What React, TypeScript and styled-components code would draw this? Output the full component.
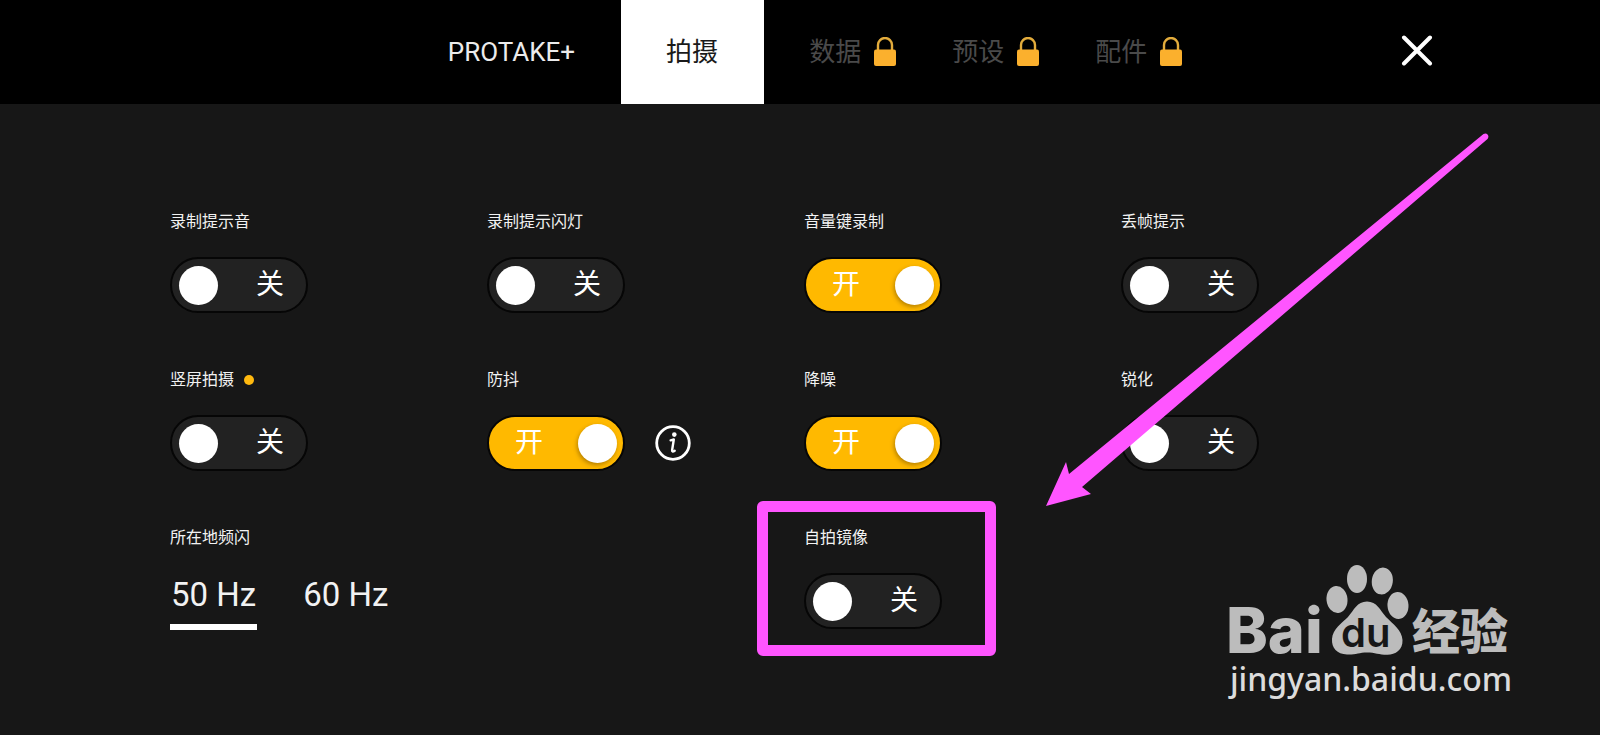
import React, { useState } from 'react';
import styled, { createGlobalStyle } from 'styled-components';

const GlobalStyle = createGlobalStyle`
  * { box-sizing: border-box; }
  body {
    margin: 0;
    background: #171717;
    color: #f2f2f2;
    font-family: Roboto, "Noto Sans CJK SC", sans-serif;
  }
  button, input { font-family: inherit; }
`;

const Page = styled.div`
  position: relative;
  min-height: 100vh;
  overflow: hidden;
`;

const Header = styled.header`
  display: grid;
  grid-template-columns: 1fr auto 1fr;
  height: 104px;
  background: #000;
`;

const Tabs = styled.nav`
  grid-column: 2;
  display: flex;
  margin-right: 4px;
`;

const Tab = styled.button<{ $active?: boolean; $locked?: boolean }>`
  display: flex;
  align-items: center;
  gap: 12px;
  padding: ${(p) => (p.$locked ? '0 10px 0 45px' : '0 46px 0 45px')};
  border: 0;
  background: ${(p) => (p.$active ? '#fff' : 'transparent')};
  color: ${(p) => (p.$active ? '#1a1a1a' : p.$locked ? '#4a4a4a' : '#ececec')};
  font-size: 26px;
  line-height: 32px;
  white-space: nowrap;
`;

const CloseButton = styled.button`
  justify-self: end;
  align-self: center;
  display: flex;
  margin-right: 160px;
  padding: 6px;
  border: 0;
  background: transparent;
  color: #fff;
`;

const Settings = styled.main`
  display: grid;
  grid-template-columns: repeat(4, 1fr);
  row-gap: 57px;
  padding: 108px 162px 96px 170px;
`;

const Field = styled.div<{ $column?: number }>`
  position: relative;
  display: flex;
  flex-direction: column;
  align-items: flex-start;
  gap: 25px;
  ${(p) => p.$column && `grid-column: ${p.$column};`}
`;

const Caption = styled.div`
  display: flex;
  align-items: center;
  gap: 10px;
  font-size: 16px;
  line-height: 20px;
  white-space: nowrap;
`;

const Dot = styled.span`
  width: 10px;
  height: 10px;
  border-radius: 50%;
  background: #ffb90f;
`;

const Control = styled.div`
  display: flex;
  align-items: center;
  gap: 30px;
`;

const Track = styled.label<{ $on: boolean }>`
  position: relative;
  display: flex;
  flex-direction: ${(p) => (p.$on ? 'row-reverse' : 'row')};
  align-items: center;
  justify-content: space-between;
  width: 138px;
  height: 56px;
  padding: ${(p) => (p.$on ? '0 6px 0 26px' : '0 22px 0 7px')};
  border: 2px solid #060606;
  border-radius: 28px;
  background: ${(p) => (p.$on ? '#ffb900' : '#222')};
  color: #fff;
  font-size: 28px;
  line-height: 40px;
`;

const HiddenInput = styled.input`
  position: absolute;
  inset: 0;
  width: 100%;
  height: 100%;
  margin: 0;
  opacity: 0;
`;

const Knob = styled.span<{ $on: boolean }>`
  width: 39px;
  height: 39px;
  border-radius: 50%;
  background: #fff;
  box-shadow: ${(p) => (p.$on ? '-1px 2px 4px rgba(90, 60, 0, 0.45)' : 'none')};
`;

const InfoButton = styled.button`
  display: flex;
  padding: 0;
  border: 0;
  background: transparent;
  color: #fff;
`;

const RadioRow = styled.div`
  display: flex;
  gap: 45px;
`;

const RadioOption = styled.label<{ $selected: boolean }>`
  position: relative;
  margin-top: 2px;
  padding: 0 1px 9px;
  border-bottom: 6px solid ${(p) => (p.$selected ? '#fff' : 'transparent')};
  font-size: 33px;
  line-height: 40px;
  white-space: nowrap;
`;

const Highlight = styled.div`
  position: absolute;
  top: -27px;
  left: -47px;
  width: 239px;
  height: 155px;
  border: 11px solid #ff55ff;
  border-radius: 6px;
  pointer-events: none;
`;

const Arrow = styled.svg`
  position: absolute;
  top: -396px;
  left: 242px;
  z-index: 1;
  pointer-events: none;
`;

const Watermark = styled.div`
  position: absolute;
  right: 88px;
  bottom: 33px;
  display: flex;
  flex-direction: column;
  color: #dcdcdc;
  font-family: "Noto Sans", sans-serif;
  font-size: 32px;
  font-weight: 500;
  line-height: 46px;
  pointer-events: none;
`;

const Logo = styled.svg`
  overflow: visible;
`;

function LockIcon() {
  return (
    <svg width="24" height="30" viewBox="0 0 24 30" aria-hidden="true">
      <path d="M5 13V8a7 7 0 0 1 14 0v5" fill="none" stroke="#e3ac3c" strokeWidth="2.4" />
      <rect x="1" y="12.500" width="22" height="16.500" rx="2" fill="#fbb02d" />
    </svg>
  );
}

function InfoIcon() {
  return (
    <svg width="36" height="36" viewBox="0 0 36 36" fill="none" stroke="currentColor" aria-hidden="true">
      <circle cx="18" cy="18" r="16.300" strokeWidth="2.8" />
      <circle cx="19.300" cy="9.600" r="2.300" fill="currentColor" stroke="none" />
      <path d="M15.600 15.300l3.200-.8-1.700 10.700c-.2 1.600.9 1.700 2.600.5" strokeWidth="2.400" strokeLinejoin="round" strokeLinecap="round" />
    </svg>
  );
}

function BaiduLogo() {
  return (
    <Logo width="280" height="92" viewBox="0 0 280 92" fill="#bcbcbc">
      <text x="-4" y="89" fontFamily="Inter, sans-serif" fontWeight="800" fontSize="63">Bai</text>
      <ellipse cx="107" cy="35.500" rx="10.500" ry="13.500" transform="rotate(-6 107 35.500)" />
      <ellipse cx="127" cy="15" rx="10" ry="14" />
      <ellipse cx="152.300" cy="17" rx="10.500" ry="13.500" transform="rotate(8 152.300 17)" />
      <ellipse cx="168" cy="41.500" rx="10.500" ry="13.500" transform="rotate(-4 168 41.500)" />
      <path d="M137 37.500C147 37.500 150 46 156 53C163 60 172 66 172.500 76C173 86 165 91 157 90.800C149 90.800 145 88.500 137 88.500C129 88.500 126 90.800 117 90.500C107 90 101.500 84 102 75C102.500 65 112 59 118 53C124 46 127 37.500 137 37.500Z" />
      <text x="111" y="83" fill="#171717" fontFamily="Inter, sans-serif" fontWeight="600" fontSize="40">du</text>
      <text x="182" y="85" fontFamily="Noto Sans CJK SC, sans-serif" fontWeight="900" fontSize="48">经验</text>
    </Logo>
  );
}

interface ToggleProps {
  id: string;
  label: string;
  initial?: boolean;
  column?: number;
  marked?: boolean;
  info?: boolean;
  children?: React.ReactNode;
}

function ToggleField({ id, label, initial = false, column, marked, info, children }: ToggleProps) {
  const [on, setOn] = useState(initial);
  return (
    <Field $column={column}>
      <Caption>
        <label htmlFor={id}>{label}</label>
        {marked && <Dot />}
      </Caption>
      <Control>
        <Track $on={on}>
          <HiddenInput id={id} type="checkbox" role="switch" checked={on} onChange={() => setOn(!on)} />
          <Knob $on={on} />
          <span>{on ? '开' : '关'}</span>
        </Track>
        {info && (
          <InfoButton type="button" aria-label={label}>
            <InfoIcon />
          </InfoButton>
        )}
      </Control>
      {children}
    </Field>
  );
}

const lockedTabs = ['数据', '预设', '配件'];
const rates = ['50 Hz', '60 Hz'];

export default function App() {
  const [rate, setRate] = useState(rates[0]);
  return (
    <Page>
      <GlobalStyle />
      <Header>
        <Tabs>
          <Tab type="button">PROTAKE+</Tab>
          <Tab type="button" $active>拍摄</Tab>
          {lockedTabs.map((name) => (
            <Tab key={name} type="button" $locked>
              {name}
              <LockIcon />
            </Tab>
          ))}
        </Tabs>
        <CloseButton type="button" aria-label="关闭">
          <svg width="34" height="34" viewBox="0 0 34 34" fill="none" stroke="currentColor" strokeWidth="4" strokeLinecap="round">
            <path d="M4 2.500L30 28.500M30 2.500L4 28.500" />
          </svg>
        </CloseButton>
      </Header>
      <Settings>
        <ToggleField id="sound" label="录制提示音" />
        <ToggleField id="flash" label="录制提示闪灯" />
        <ToggleField id="volume" label="音量键录制" initial />
        <ToggleField id="drop" label="丢帧提示" />
        <ToggleField id="portrait" label="竖屏拍摄" marked />
        <ToggleField id="stabilize" label="防抖" initial info />
        <ToggleField id="denoise" label="降噪" initial />
        <ToggleField id="sharpen" label="锐化" />
        <Field role="radiogroup" aria-labelledby="flicker">
          <Caption id="flicker">所在地频闪</Caption>
          <RadioRow>
            {rates.map((value) => (
              <RadioOption key={value} $selected={rate === value}>
                <HiddenInput type="radio" name="rate" checked={rate === value} onChange={() => setRate(value)} />
                {value}
              </RadioOption>
            ))}
          </RadioRow>
        </Field>
        <ToggleField id="mirror" label="自拍镜像" column={3}>
          <Highlight />
          <Arrow width="446" height="376" viewBox="0 0 446 376" fill="#ff55ff" aria-hidden="true">
            <path d="M0 374L20 330L23 342L437.500 2C441 0 444 4 441.500 7L36 355L45 362Z" />
          </Arrow>
        </ToggleField>
      </Settings>
      <Watermark>
        <BaiduLogo />
        <span>jingyan.baidu.com</span>
      </Watermark>
    </Page>
  );
}
